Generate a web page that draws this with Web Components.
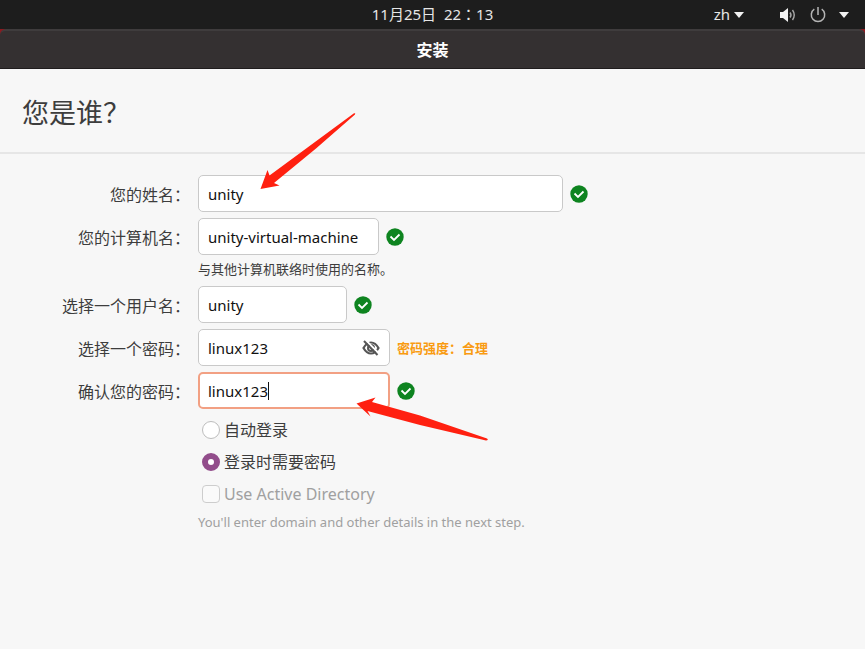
<!DOCTYPE html>
<html lang="zh-CN">
<head>
<meta charset="utf-8">
<meta name="viewport" content="width=device-width, initial-scale=1">
<title>安装</title>
<style>
body {
    margin: 0;
    min-height: 100vh;
    position: relative;
    background: #f7f7f7;
    color: #3d3d3d;
    font-family: "Noto Sans", "Noto Sans CJK SC", sans-serif;
    font-size: 16px;
}
</style>
</head>
<body>
<system-bar lang="zh-TW">11月25日&nbsp; 22：13</system-bar>
<window-title>安装</window-title>
<page-heading>您是谁？</page-heading>
<account-form>
    <text-row label="您的姓名：" value="unity" size="wide" valid></text-row>
    <text-row label="您的计算机名：" value="unity-virtual-machine" size="medium" valid>
        <span slot="hint">与其他计算机联络时使用的名称。</span>
    </text-row>
    <text-row label="选择一个用户名：" value="unity" size="small" valid></text-row>
    <text-row label="选择一个密码：" value="linux123" size="password" toggle>
        <strength-note slot="status">密码强度：合理</strength-note>
    </text-row>
    <text-row label="确认您的密码：" value="linux123" size="password" active valid></text-row>
    <choice-row slot="choices" type="radio">自动登录</choice-row>
    <choice-row slot="choices" type="radio" checked>登录时需要密码</choice-row>
    <choice-row slot="choices" type="checkbox" disabled>Use Active Directory</choice-row>
    <span slot="note">You'll enter domain and other details in the next step.</span>
</account-form>
<callout-arrows></callout-arrows>

<script>
class SystemBar extends HTMLElement{
    constructor(){
        super();
        this.attachShadow({mode: "open"}).innerHTML = `
        <style>
        :host {
            display: grid;
            grid-template-columns: 1fr auto 1fr;
            align-items: center;
            height: 29px;
            padding: 0 16px;
            background: #1d1d1d;
            color: #e6e6e6;
            font-family: "Noto Sans", "Noto Sans CJK TC", sans-serif;
            font-size: 15px;
        }
        .clock {
            grid-column: 2;
            line-height: 29px;
        }
        .tray {
            display: flex;
            align-items: center;
            justify-content: flex-end;
        }
        button {
            display: flex;
            align-items: center;
            border: 0;
            padding: 0;
            background: none;
            color: inherit;
            font: inherit;
            line-height: 29px;
        }
        .lang { gap: 4px; margin-right: 36px; }
        .system { gap: 13px; }
        svg { display: block; }
        </style>
        <span class="clock"><slot></slot></span>
        <div class="tray">
            <button class="lang">zh
                <svg width="10" height="6"><path d="M0 0h10L5 6z" fill="#f2f2f2"/></svg>
            </button>
            <button class="system" aria-label="系统">
                <svg width="17" height="16" viewBox="0 0 17 16" fill="none" stroke="#a8a8a8" stroke-width="1.4">
                    <path d="M0 5h3l5-4v14l-5-4H0z" fill="#f2f2f2" stroke="none"/>
                    <path d="M10 5.5q2 2.500 0 5"/>
                    <path d="M12.500 3q3.500 5 0 10"/>
                </svg>
                <svg width="16" height="16" viewBox="0 0 16 16" fill="none" stroke="#b5b5b5" stroke-width="1.500">
                    <path d="M4.300 2.200a6.700 6.700 0 1 0 7.400 0M8 0v8"/>
                </svg>
                <svg width="10" height="6"><path d="M0 0h10L5 6z" fill="#f2f2f2"/></svg>
            </button>
        </div>
        `;
    }
}
customElements.define("system-bar", SystemBar);

class WindowTitle extends HTMLElement{
    constructor(){
        super();
        this.attachShadow({mode: "open"}).innerHTML = `
        <style>
        :host {
            display: block;
            background: #8c1a20;
        }
        h1 {
            box-sizing: border-box;
            height: 40px;
            margin: 0;
            border-top: 2px solid #3f3c3d;
            border-bottom: 1px solid #1f1c1d;
            border-radius: 6px 6px 0 0;
            background: #343031;
            color: #ffffff;
            font-size: 16px;
            line-height: 38px;
            font-weight: bold;
            text-align: center;
        }
        </style>
        <h1><slot></slot></h1>
        `;
    }
}
customElements.define("window-title", WindowTitle);

class PageHeading extends HTMLElement{
    constructor(){
        super();
        this.attachShadow({mode: "open"}).innerHTML = `
        <style>
        :host {
            display: block;
            padding: 22px 22px 18px;
            border-bottom: 2px solid #e6e6e6;
        }
        h2 {
            margin: 0;
            font-size: 27px;
            line-height: 43px;
            font-weight: normal;
        }
        </style>
        <h2><slot></slot></h2>
        `;
    }
}
customElements.define("page-heading", PageHeading);

class AccountForm extends HTMLElement{
    constructor(){
        super();
        this.attachShadow({mode: "open"}).innerHTML = `
        <style>
        :host {
            display: block;
        }
        form {
            display: flex;
            flex-direction: column;
            gap: 6px;
            padding-top: 21px;
        }
        .choices {
            display: flex;
            flex-direction: column;
            gap: 8px;
            padding: 3px 0 0 202px;
        }
        .note {
            padding-left: 198px;
            color: #a0a0a0;
            font-size: 13px;
            line-height: 20px;
        }
        </style>
        <form>
            <slot></slot>
            <div class="choices"><slot name="choices"></slot></div>
            <div class="note"><slot name="note"></slot></div>
        </form>
        `;
    }
}
customElements.define("account-form", AccountForm);

class TextRow extends HTMLElement{
    constructor(){
        super();
        this.attachShadow({mode: "open"});
    }

    connectedCallback(){
        const tick = `
            <svg class="tick" width="18" height="18" viewBox="0 0 18 18" role="img" aria-label="有效">
                <circle cx="9" cy="9" r="8.700" fill="#0e8420"/>
                <path d="M4.500 8.500l3.500 3.500 5.500-5.500" fill="none" stroke="#fff" stroke-width="1.800"/>
            </svg>`;
        const eye = `
            <button type="button" aria-label="显示密码">
                <svg width="18" height="16" viewBox="0 0 18 16" fill="none" stroke="#555">
                    <path d="M1.500 8C4 3.500 6.500 2.500 9 2.500S14 3.500 16.500 8C14 12.500 11.500 13.500 9 13.500S4 12.500 1.500 8z" stroke-width="2.200"/>
                    <circle cx="9" cy="8" r="3" stroke-width="2"/>
                    <path d="M3.500 0L17 13.500" stroke="#fff" stroke-width="2"/>
                    <path d="M2 1L15.500 15" stroke-width="2"/>
                </svg>
            </button>`;
        this.shadowRoot.innerHTML = `
        <style>
        :host {
            display: grid;
            grid-template-columns: 198px auto 1fr;
            align-items: center;
        }
        label {
            padding-right: 8px;
            text-align: right;
            white-space: nowrap;
        }
        .box {
            box-sizing: border-box;
            display: flex;
            align-items: center;
            height: 37px;
            padding: 0 9px;
            border: 1px solid #c9c9c9;
            border-radius: 5px;
            background: #fff;
        }
        .wide { width: 365px; }
        .medium { width: 181px; }
        .small { width: 149px; }
        .password { width: 192px; }
        :host([active]) .box {
            border: 2px solid #f2a083;
            padding: 0 8px;
        }
        input {
            flex: 1;
            min-width: 0;
            border: 0;
            padding: 0;
            outline: 0;
            background: none;
            color: #111;
            font: inherit;
            font-size: 15px;
        }
        :host([active]) input {
            flex: none;
            field-sizing: content;
        }
        .caret {
            width: 1px;
            height: 18px;
            background: #111;
        }
        .status {
            padding-left: 7px;
        }
        button {
            border: 0;
            padding: 0;
            background: none;
        }
        svg { display: block; }
        ::slotted([slot=hint]) {
            grid-column: 2 / 4;
            padding-top: 3px;
            font-size: 13px;
            line-height: 22px;
        }
        </style>
        <label for="field">${this.getAttribute("label")}</label>
        <div class="box ${this.getAttribute("size")}">
            <input id="field" type="text" value="${this.getAttribute("value")}">
            ${this.hasAttribute("active") ? `<span class="caret"></span>` : ""}
            ${this.hasAttribute("toggle") ? eye : ""}
        </div>
        <div class="status">${this.hasAttribute("valid") ? tick : ""}<slot name="status"></slot></div>
        <slot name="hint"></slot>
        `;
    }
}
customElements.define("text-row", TextRow);

class StrengthNote extends HTMLElement{
    constructor(){
        super();
        this.attachShadow({mode: "open"}).innerHTML = `
        <style>
        :host {
            display: block;
            color: #f99b11;
            font-size: 13px;
            font-weight: bold;
        }
        </style>
        <slot></slot>
        `;
    }
}
customElements.define("strength-note", StrengthNote);

class ChoiceRow extends HTMLElement{
    constructor(){
        super();
        this.attachShadow({mode: "open"});
    }

    connectedCallback(){
        const checked = this.hasAttribute("checked") ? "checked" : "";
        const disabled = this.hasAttribute("disabled") ? "disabled" : "";
        this.shadowRoot.innerHTML = `
        <style>
        :host {
            display: block;
        }
        label {
            display: flex;
            align-items: center;
            gap: 4px;
            line-height: 24px;
        }
        :host([disabled]) label {
            color: #a0a0a0;
        }
        input {
            appearance: none;
            box-sizing: border-box;
            width: 18px;
            height: 18px;
            margin: 0;
            border: 1px solid #bdbdbd;
            border-radius: 4px;
            background: #fff;
        }
        input[type=radio] {
            border-radius: 50%;
        }
        input:checked {
            border: 6px solid #924d8b;
        }
        input:disabled {
            border-color: #cdcdcd;
            background: #fafafa;
        }
        </style>
        <label><input type="${this.getAttribute("type")}" ${checked} ${disabled}><span><slot></slot></span></label>
        `;
    }
}
customElements.define("choice-row", ChoiceRow);

// red pointers lying over the form
class CalloutArrows extends HTMLElement{
    constructor(){
        super();
        this.attachShadow({mode: "open"}).innerHTML = `
        <style>
        :host {
            position: absolute;
            top: 0;
            left: 0;
            pointer-events: none;
        }
        svg { display: block; }
        </style>
        <svg width="500" height="450" fill="#ff2010" aria-hidden="true">
            <path d="M260.500 189L267.500 170L269.500 175.500L354 113.300Q356 113 355 114.500L316 148.500L274 183L279.500 185.500z"/>
            <path d="M356.500 403.500L375.500 397.500L372 402L420 415.500L487 438.500Q489 440 486 440.500L420 425L367.500 411L370.500 416.500z"/>
        </svg>
        `;
    }
}
customElements.define("callout-arrows", CalloutArrows);
</script>
</body>
</html>
